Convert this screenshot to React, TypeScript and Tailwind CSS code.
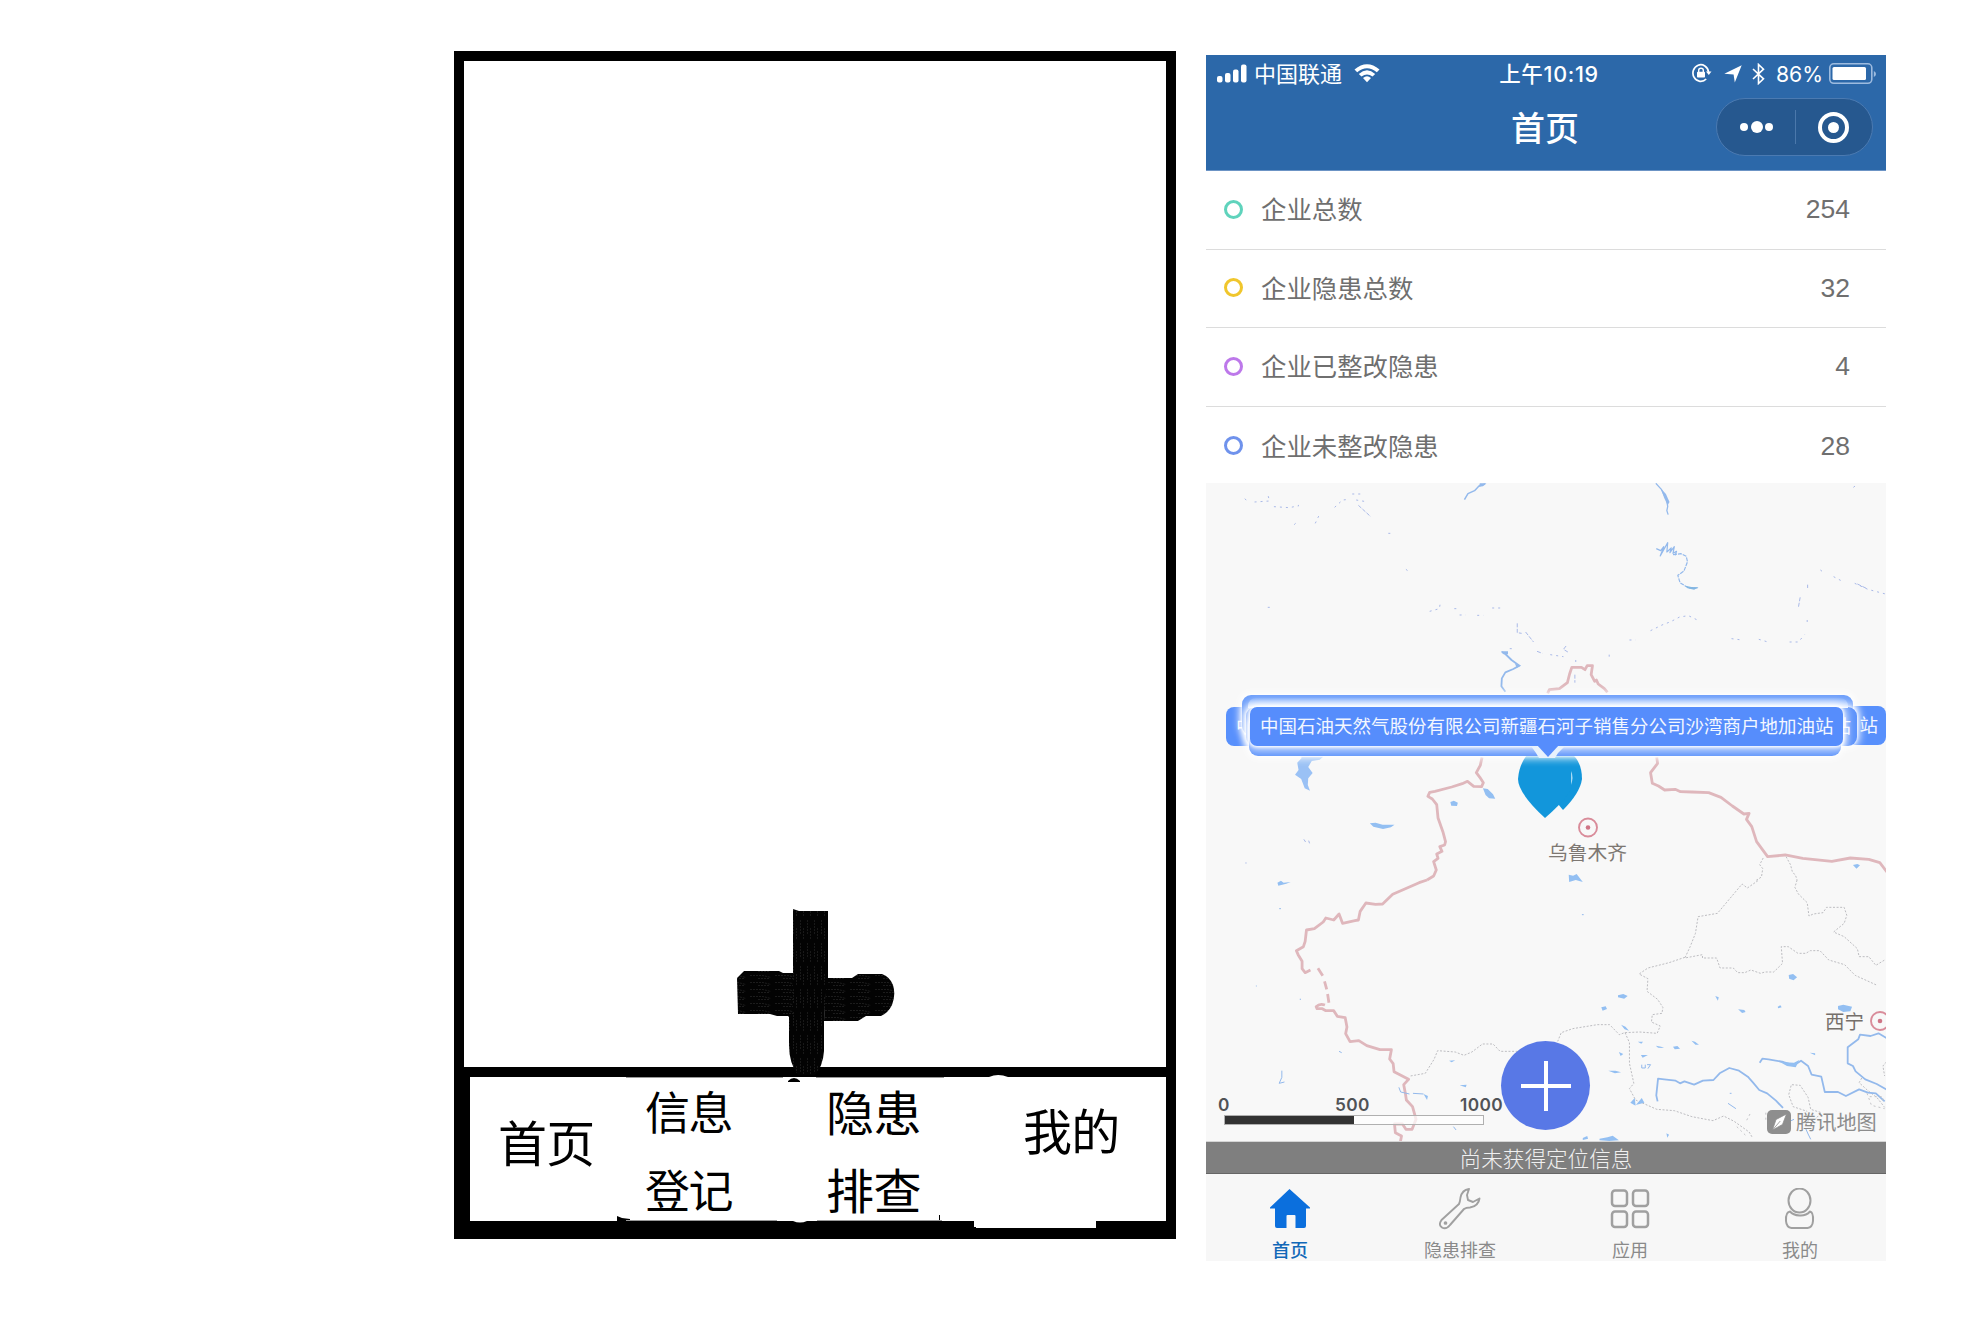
import React from "react";

const CJK = "font-['Noto_Sans_CJK_SC',sans-serif]";

const FULL_NAME = "中国石油天然气股份有限公司新疆石河子销售分公司沙湾商户地加油站";

const stats = [
  { label: "企业总数", value: "254", ring: "border-[#5fd3bc]" },
  { label: "企业隐患总数", value: "32", ring: "border-[#f0c62c]" },
  { label: "企业已整改隐患", value: "4", ring: "border-[#bd78ea]" },
  { label: "企业未整改隐患", value: "28", ring: "border-[#6f92ec]" },
];

function PlusStroke() {
  return (
    <svg className="absolute left-[280px] top-[852px] h-[240px] w-[170px]" viewBox="734 903 170 240">
      <defs>
        <pattern id="vert" width="7" height="23" patternUnits="userSpaceOnUse">
          <rect width="7" height="23" fill="#030303" />
          <path d="M2.5 0v14M5.5 8v12" stroke="#1e1e1e" strokeWidth="0.8" strokeDasharray="2 1" />
        </pattern>
        <pattern id="horiz" width="25" height="7" patternUnits="userSpaceOnUse">
          <rect width="25" height="7" fill="#030303" />
          <path d="M0 2.5h13l8 2M8 5.5h12" stroke="#222" strokeWidth="0.8" strokeDasharray="2 1" fill="none" />
        </pattern>
      </defs>
      <path
        d="M737 978l7-7h35l4 2h12v44h-6l-1-1h-11l-7-2h-32z M826 978h26l6-4h24q8 3 11 11 3 10-1 20-4 8-11 11h-15l-8 5h-34z"
        fill="url(#horiz)"
      />
      <path
        d="M793 909l6 2h29v68q-2 4-2 14l-2 28v30q-1 15-9 24h-17q-9-12-9-30v-28l4-3z"
        fill="url(#vert)"
      />
      <path d="M788 1081q6-6 12 0v1h-12z" fill="#000" />
    </svg>
  );
}

function Sketch() {
  return (
    <section
      className={`relative ml-[454px] mt-[51px] flex h-[1188px] w-[722px] flex-col bg-black pb-[18px] pl-[10px] pr-[10px] pt-[10px] text-black ${CJK}`}
    >
      <div className="h-[1006px] shrink-0 bg-white" />
      <div className="ml-[6px] mt-[10px] flex h-[144px] bg-white">
        <div className="w-[150px] pl-[28px] pt-[28px] text-[49px] leading-[72px] tracking-[-0.700px]">首页</div>
        <div className="w-[182px] pl-[25px] text-[45px] leading-[78px] tracking-[-1.500px]">
          <div className="-mt-[5px] whitespace-nowrap">信息</div>
          <div className="whitespace-nowrap">登记</div>
        </div>
        <div className="w-[196px] pl-[24px] text-[48px] leading-[78px] tracking-[-0.500px]">
          <div className="-mt-[6px] whitespace-nowrap">隐患</div>
          <div className="whitespace-nowrap">排查</div>
        </div>
        <div className="pl-[25px] pt-[16px] text-[49px] leading-[72px] tracking-[-0.700px]">我的</div>
      </div>
      <svg className="absolute left-0 top-[1020px] h-[168px] w-[722px]" viewBox="454 1071 722 168">
        <path d="M974 1221h122v7h-120v-1h-2z" fill="#fff" />
        <path d="M989 1077q9-4 19 0z" fill="#fff" />
        <path d="M793 1221q7 3 14 0z" fill="#fff" />
        <path d="M617 1216l5 2 8 1v2h-13zM939 1215h1v7h-1z" fill="#000" />
        <path d="M626 1077.500h157M816 1077.500h128M626 1220.500h151M817 1220.500h125" stroke="#999" strokeWidth="1" />
      </svg>
      <PlusStroke />
    </section>
  );
}

function StatusBar() {
  return (
    <div className="relative flex h-[38px] items-center pl-[11px] pr-[10px]">
      <svg className="h-[20px] w-[30px]" viewBox="0 0 30 20" fill="#fff">
        <rect x="0" y="12" width="5.500" height="6.500" rx="2" />
        <rect x="8" y="9" width="5.500" height="9.500" rx="2" />
        <rect x="16" y="5.500" width="5.500" height="13" rx="2" />
        <rect x="24" y="0.500" width="5.500" height="18" rx="2" />
      </svg>
      <span className="relative -top-[2px] ml-[7px] text-[22px] leading-[38px]">中国联通</span>
      <svg className="relative -top-px ml-[12px] h-[19px] w-[26px]" viewBox="0 0 26 19" fill="#fff">
        <path d="M0.500 5.500Q13-5 25.500 5.500L22.800 8.300Q13 0 3.200 8.300z" />
        <path d="M4.800 9.900Q13 2.800 21.200 9.900L18.500 12.600Q13 8.200 7.500 12.600z" />
        <path d="M9 14Q13 10.600 17 14L13 18.300z" />
      </svg>
      <div className="absolute inset-x-0 text-center font-['Inter','Noto_Sans_CJK_SC',sans-serif] text-[21.500px] font-medium leading-[38px] tracking-[0.700px]">
        <span className="relative left-[3px]">上午10:19</span>
      </div>
      <svg className="relative -top-px ml-auto h-[20px] w-[20px]" viewBox="0 0 20 20" fill="none" stroke="#fff" strokeWidth="1.700">
        <path d="M16.500 9A7.800 8.300 0 1 0 14.200 16" />
        <path d="M14 8.500h5.500l-2.700 3.500z" fill="#fff" stroke="none" />
        <rect x="5" y="8.800" width="8" height="5.800" rx="0.800" fill="#fff" stroke="none" />
        <path d="M6.700 9V7.200q0-2 2.300-2t2.300 2V9" strokeWidth="1.400" />
      </svg>
      <svg className="ml-[12px] h-[18px] w-[18px]" viewBox="0 0 18 18" fill="#fff">
        <path d="M17.700 0.300L10.800 17.500L9.600 9.400L0.300 8.800z" />
      </svg>
      <svg className="ml-[10px] h-[22px] w-[13px]" viewBox="0 0 13 22" fill="none" stroke="#fff" strokeWidth="1.600">
        <path d="M1 6l10.500 9.800L6.500 20.500V1.500l5 4.700L1 16" />
      </svg>
      <span className="ml-[11px] font-['Inter',sans-serif] text-[21.200px] leading-[38px]">86%</span>
      <svg className="ml-[6px] h-[22px] w-[47px]" viewBox="0 0 47 22">
        <rect x="0.800" y="0.800" width="42" height="19.500" rx="4" fill="none" stroke="#9dbbdf" strokeWidth="1.600" />
        <rect x="3.500" y="4" width="33.500" height="13" rx="1.500" fill="#fff" />
        <path d="M44.800 8q2.200 1 2.200 3t-2.200 3z" fill="#9dbbdf" />
      </svg>
    </div>
  );
}

function Header() {
  return (
    <header className="flex h-[116px] flex-col border-b border-[#6c94c5] bg-[#2c68a9] text-white">
      <StatusBar />
      <div className="relative flex h-[72px] items-center justify-center">
        <h1 className="relative -top-[2px] left-[-1px] text-[34px] font-medium leading-[48px]">首页</h1>
        <div className="absolute right-[13px] top-[5px] flex h-[58px] w-[157px] items-center rounded-full border border-[#4b7ab1] bg-[#26588f]">
          <div className="flex w-[78px] items-center justify-center gap-[2.500px] pl-[1px]">
            <i className="h-[8px] w-[8px] rounded-full bg-white" />
            <i className="h-[12px] w-[12px] rounded-full bg-white" />
            <i className="h-[8px] w-[8px] rounded-full bg-white" />
          </div>
          <div className="h-[34px] w-px bg-[#4b78ab]" />
          <div className="ml-[22px] flex h-[31px] w-[31px] items-center justify-center rounded-full border-[4px] border-white">
            <i className="h-[11px] w-[11px] rounded-full bg-white" />
          </div>
        </div>
      </div>
    </header>
  );
}

function StatList() {
  return (
    <ul className="flex h-[312px] flex-col bg-white text-[#6f6f6f]">
      {stats.map((s, i) => (
        <li
          key={s.label}
          className={`flex h-[78.600px] shrink-0 items-center pb-px pl-[18px] pr-[36px] ${i < 3 ? "border-b border-[#dcdcdc]" : ""}`}
        >
          <span className={`h-[19px] w-[19px] rounded-full border-[3px] ${s.ring}`} />
          <span className="relative -top-px ml-[18px] text-[25.400px] leading-[36px]">{s.label}</span>
          <span className="ml-auto font-['Liberation_Sans',sans-serif] text-[26.500px] leading-[36px]">{s.value}</span>
        </li>
      ))}
    </ul>
  );
}

function MapDrawing() {
  const red = { stroke: "#dfb7bc", fill: "none", vectorEffect: "non-scaling-stroke" as const, strokeWidth: 2.8, strokeLinejoin: "round" as const };
  const blue = { stroke: "#93b9ec", fill: "none", vectorEffect: "non-scaling-stroke" as const, strokeWidth: 1.8, strokeLinejoin: "round" as const };
  const thin = { stroke: "#a9b9e8", fill: "none", vectorEffect: "non-scaling-stroke" as const, strokeWidth: 1 };
  const gray = { stroke: "#bdbdc1", fill: "none", vectorEffect: "non-scaling-stroke" as const, strokeWidth: 1, strokeDasharray: "2 1.6" };
  return (
    <svg className="absolute inset-0 h-full w-full" viewBox="0 0 680 658">
      <g transform="translate(-6 -3) scale(0.44 0.33333)">
        <path {...blue} strokeWidth={1.5} d="M648 12l-14 6-10 14-15 9-8 18" />
        <path d="M636 10h15l-8 9-9 1z" fill="#93b9ec" />
        <path {...blue} strokeWidth={1.3} d="M1036 10l13 19 5 14 6 14 3 22-2 13 3 12" />
        <path d="M1047 25l12 17 8 24-4 10-8-22z" fill="#93b9ec" />
        <path {...blue} strokeWidth={1.2} d="M1037 206l10 6 7-12-8 28 17-40-2 28 10-12-3 14 10-18-3 20 8-6-3 12" />
        <path {...blue} strokeWidth={1.2} d="M1075 224l18-3 12 8 3 16-8 28-14 13 5 22 12 10 8 6h20" strokeDasharray="4 1" />
        <path d="M1102 317l15 4 16 1-10 7-15-4z" fill="#83b6e2" />
        <path {...thin} strokeDasharray="2 4" d="M102 56l4 6M124 66l34-3-4-20M168 80l35 3 22-6-8-6M306 82l18-22 16-2M346 42h20M355 60l18 4M214 134l10-12M262 130l10-28M522 394l22-8 2-16M578 386h10M590 405h14M630 406h14M664 384h24M468 268l10 10M428 160h8M154 382h6M1024 452l26-17 20-10 20-14 20-4 22 14M976 480h14M1208 476l24 4M1270 478l26 10M1340 486h20l14-22M1380 420v10M1410 270l6 6M1440 290l20 14M1488 310l30 18 40 14M1485 22l8-8M704 506h8M796 524l30 6M930 524v8M854 540v14" />
        <path {...thin} strokeDasharray="4 1.5" d="M360 76l28 34M721 430v28l10 2M740 456l18 30M766 514l12 6M832 498l-6 10 10 8M1381 314v10M1364 352l-4 30M852 584v24M1494 312l22 14" />
        <path {...blue} d="M686 516l8 6 14 18 18 17-14 10-18 10-8 18-1 24 9 16" />
        <path d="M684 514h16v9h-10zM716 552l14 4-10 7z" fill="#93b9ec" />
        <path {...red} d="M790 640l4-11 23-3 18-18 5-26 5-20 22 0 8 7 5-12 12 0-3 27 8 20 4-4 4 12 14 14 7 11" />
      </g>
      <g transform="translate(-6 197) scale(0.44 0.33333)">
        <path d="M230 230h50l-8 9-18 4-8 18 10 18-10 16-1 20 5 17-12-7-8-28-14-13 8-14-3-22 10-14z" fill="#9ac1f5" />
        <path
          {...red}
          d="M641 232L637 256 628 278 636 292 644 308 640 320 622 319 608 304 596 311 572 321 534 334 522 337 518 349 528 357 538 374 541 414 552 455 558 485 556 495 545 500 550 514 538 522 541 535 531 545 537 570 531 588 516 600"
        />
        <path
          {...red}
          d="M1038 232L1040 250 1024 278 1028 310 1042 318 1056 330 1080 328 1092 335 1118 336 1156 338 1184 352 1210 378 1236 402 1248 400 1242 418 1254 440 1265 485 1290 530 1330 525 1370 535 1436 544 1478 534 1520 538 1545 548 1562 577"
        />
        <path d="M643 325l11 2 12 16 5 13-14-1-8-10zM569 366l8-4 9 6-2 10-13-1zM386 430l13-2 16 6 27 0-8 8-18 5-22-7zM838 584l10 3 8-5 14 24-16-6-15 6zM176 608l8-6 6 6 16-2-10 5-18 6zM1484 555l10-3 6 4-8 10z" fill="#93bff2" />
        <path {...thin} d="M236 478l4 8M247 482l2 8M103 549h3" />
        <path {...gray} d="M1280 534l-8 20 7 12-3 25-12 10" />
        <path {...gray} d="M1332 530l10 24 4 20 8 14 3 12" />
      </g>
      <g transform="translate(-6 397) scale(0.44 0.33333)">
        <path {...red} d="M516 0l-18 8-60 35-23 29-16 1-22-4-13 25-4 26-8 2-28 8-8-28-12 18-18-6-6 12-20 20-18 4-3 34-4 16-16 12 4 12 9 20 0 22 7 12 12-8" />
        <path {...red} d="M268 265l11 22M283 304l5 24M290 342l3 26" />
        <path {...red} d="M284 375q-12-6-20 5l2 6h12l8 6h18l8 17 18 4 4 28-3 20 10 24 20-3 18 15 30 12 26 0-4 28 8 14 2 24 33 23-11 16 4 28 2 18 14 20 8 38-9 30-14 0-8-16-18 0 2 26 14 10-3 20" />
        <path {...gray} d="M1268 2l-24 22-12-12-28 44-28 44-44 10-6 50-12 40-12 34 40-10 0 10h32l8 30 30 0 10 14 16 0 14-8 22 10 10-4 20 0 20-26-3-50 16 0 22 20 18 0 10-8 22 0 20 28 36 14 24 32 50 30" />
        <path {...gray} d="M1102 232l-36 16-48 16-20 18 20 14-2 38 24 24 12 24-2 18-22 4-2 22 20 12-7 22-40-4-34 2-12 6-22-30-28 0-56 12-26 12-8 26M722 514h-40l-16-22h-24l-24 24-18 10-20-10-40-4-8 26-20 42-34 8" />
        <path {...gray} d="M966 458l10 30v62l10 60-10 16 14 34 48 28 40 4 40 18 48 12 24-14 24 16 34 32 8 18 M1357 0l-5 22 8 20 20 26 4 40 10-6 22-4 8-16 40 0 6 24-6 24-24 26 24 14 30 36 4 24 22 0 16 26 20-16" />
        <path {...gray} d="M1380 724l18-6 14-20-24-10-6-36-18-36-20-2-6 30 10 36 32 14M1560 546l-8 12 4 30M1504 594l-6 14 20 24 20 20 18 30" />
        <path {...blue} d="M1040 664l-3-18 4-50 14 2 26 4 10 8 10-6 22 10 20-12 24-2 14-20 22-16 22 8 20 18 12 18 14 22 18 10 20 22 16 22" />
        <path {...blue} d="M1272 548l6-12 14 2 34 8 24 10 16-14 16 16 8 26 22 6 8 46 30 0 18 12 30-20 20 10 18 2 20 24" />
        <path d="M1318 546l32 2 12-8-8 22-20-4z" fill="#93bff2" />
        <path {...blue} d="M1560 474l-18-14-18 8-24-4-4 14-24 24 0 48 12 8 6 16 22 24 26 14 24 18" />
        <path d="M950 346l12-4 10 6-8 8-14-4zM912 382l10-3 3 8-10 5zM1338 285l10-3 9 10-8 9-10-5zM1450 378l12-4 20 6-4 14-16 2-12-8zM1223 388l14 2 3 6-8 3zM1171 348l8 4-2 10zM1313 380l6-4 3 6-8 3zM957 434l10 6 8 12-10-4zM995 485l12 0-4 6zM1036 497l12 3 7 4-14-1zM1075 500l10-2 6 8-12 2zM1117 482l8 3 9 9-8 0zM952 516l10 6-6 6zM1002 525l16 0-12 8zM928 572l16 0 13 5-14 3zM566 542l14-1-8 6zM590 616l16-2-2 8zM508 642l10 6-2 12zM1386 518l12 2 0 6zM1060 760l6 4-4 9zM870 774l10-6 2 8-12 4zM908 776l18-4 12-5 14 14-22 2-22-2zM978 668l10-14 2 22 14-22 6 14-22 8z" fill="#93bff2" />
        <path {...thin} stroke="#93b9ec" d="M1004 554v10h8v-10M1016 554h8l-6 12M186 572v20l-6 18 12-4M452 622l4 14 20 6M484 640l24 2M316 514l6 4M127 318h2M228 356v4M180 86h4M868 104h4M1204 640h4M1200 670l18 16M1340 724l10-6M1376 744l6 18 6 16M576 740l6 10" />
        <path {...thin} stroke="#c4c4c8" strokeDasharray="2 3" d="M1250 702l-8 20M1286 698v24M1220 740l20 26M1516 640l10 36 30 10M1522 650l30 0 0 20" />
      </g>
      <g fill="none" stroke="#d98c9a">
        <circle cx="382" cy="344.500" r="9" strokeWidth="1.900" />
        <circle cx="674" cy="538" r="9" strokeWidth="1.900" />
      </g>
      <circle cx="382" cy="344.500" r="2.300" fill="#cf7586" />
      <circle cx="674" cy="538" r="2.300" fill="#cf7586" />
      <g fill="#1296db">
        <path d="M352 270h13q11 9 11 26-2 14-19 31l-5-6z" />
        <path d="M339 335Q312 310 312 296Q313 282 321 272L329 266H351L359 272Q367 282 368 296Q368 310 339 335z" />
      </g>
      <path d="M365 288q3 6 0 14z" fill="#a7daf3" />
    </svg>
  );
}

const glow = "shadow-[0_0_3px_#fff,0_0_9px_2px_#fff]";

function Callouts() {
  return (
    <div className="text-[18.500px] leading-[37px] text-[#f3f7ff]">
      <div className="absolute left-[20px] top-[224px] h-[39px] w-[620px] rounded-[8px] bg-[#5890fc]">
        <span className="absolute left-[10px]">中</span>
      </div>
      <div className="absolute left-[60px] top-[223px] h-[39px] w-[620px] rounded-[8px] bg-[#5890fc] pr-[8px] text-right">站</div>
      <div className={`absolute left-[36px] top-[212px] h-[40px] w-[611px] rounded-[9px] bg-[#6fa0fb] ${glow}`} />
      <div className={`absolute left-[40px] top-[224px] h-[39px] w-[611px] overflow-hidden rounded-[9px] bg-[#5c92fb] text-right ${glow}`}>
        <span className="mr-[6px]">站</span>
      </div>
      <div className={`absolute left-[43px] top-[234px] h-[39px] w-[592px] rounded-[9px] bg-[#6196fb] ${glow}`} />
      <div className="absolute left-[42px] top-[215px] h-[10px] w-[600px] rounded-t-[8px] bg-gradient-to-b from-[#7daafb] to-[#f4f8ff]" />
      <div className="absolute left-[44px] top-[224px] h-[39px] w-[593px] whitespace-nowrap rounded-[7px] bg-[#568dfc] pl-[10px] shadow-[0_0_3px_1px_#fff,0_0_8px_4px_#ffffffcc]">
        {FULL_NAME}
      </div>
      <svg className="absolute left-[325px] top-[262px] h-[14px] w-[34px]" viewBox="0 0 34 14">
        <path d="M0 1h34l-7 7-3 5H8L5 8z" fill="#e8f2fc" />
        <path d="M6 0h22L17 12z" fill="#568dfc" />
      </svg>
    </div>
  );
}

function MapPanel() {
  return (
    <div className="relative h-[658px] shrink-0 overflow-hidden bg-[#f8f8f8]">
      <MapDrawing />
      <Callouts />
      <div className="absolute left-[342px] top-[355px] text-[19.800px] leading-[28px] text-[#7d7772]">乌鲁木齐</div>
      <div className="absolute left-[619px] top-[524px] text-[19.500px] leading-[28px] text-[#756f6a]">西宁</div>
      <div className="font-['Inter',sans-serif] text-[17.300px] font-semibold leading-[20px] tracking-[0.400px] text-[#505256]">
        <span className="absolute left-[12px] top-[612px]">0</span>
        <span className="absolute left-[129px] top-[612px]">500</span>
        <span className="absolute left-[254px] top-[612px]">1000</span>
      </div>
      <div className="absolute left-[18px] top-[632px] h-[10px] w-[260px] border border-[#b0b0b0] bg-white/70">
        <div className="h-full w-1/2 bg-[#333]" />
      </div>
      <button className="absolute left-[295px] top-[558px] flex h-[89px] w-[89px] items-center justify-center rounded-full bg-[#5878e6]">
        <svg className="h-[50px] w-[50px]" viewBox="0 0 50 50" stroke="#fff" strokeWidth="4">
          <path d="M25 0v50M0 25h50" />
        </svg>
      </button>
      <div className="absolute left-[561px] top-[625px] flex items-center text-[20.200px] leading-[28px] text-[#8c8c8c]">
        <svg className="mr-[5px] h-[24px] w-[24px]" viewBox="0 0 24 24">
          <rect width="24" height="24" rx="5" fill="#8e8e8e" />
          <path d="M19.500 4L15.500 14.500L5.500 20L9 9.500zM5.500 20L13.300 11" fill="#fff" stroke="#8e8e8e" strokeWidth="0.800" />
        </svg>
        腾讯地图
      </div>
    </div>
  );
}

function HomeIcon() {
  return (
    <svg className="h-[42px] w-[42px]" viewBox="0 0 42 42" fill="#0b6fdd">
      <path d="M20.500 1L41 19.500V20.500H37V38q0 2-2 2h-8.500V28q0-1-1-1h-7q-1 0-1 1v12H8q-2 0-2-2V20.500H1V19.500z" />
    </svg>
  );
}

function WrenchIcon() {
  return (
    <svg className="h-[42px] w-[42px]" viewBox="0 0 42 42" fill="none" stroke="#a0a0a0" strokeWidth="1.900" strokeLinejoin="round">
      <path d="M30 1Q23 2 21.500 9.500Q21 14 20 16L2.500 32Q-1 37 3 39.500Q7 42 11 37L25 21Q27 19.500 31 19.500Q39.500 18 40.500 10.500L34 14L29 12L28 7z" />
      <circle cx="6.500" cy="35" r="0.900" />
    </svg>
  );
}

function AppsIcon() {
  return (
    <svg className="h-[42px] w-[42px]" viewBox="0 0 42 42" fill="none" stroke="#a0a0a0" strokeWidth="2.500">
      <rect x="3" y="2.500" width="15" height="15.500" rx="3" />
      <rect x="24" y="2.500" width="15" height="15.500" rx="3" />
      <rect x="3" y="23.500" width="15" height="15.500" rx="3" />
      <rect x="24" y="23.500" width="15" height="15.500" rx="3" />
    </svg>
  );
}

function UserIcon() {
  return (
    <svg className="h-[42px] w-[42px]" viewBox="0 0 42 42" fill="none" stroke="#a0a0a0" strokeWidth="2">
      <ellipse cx="20.500" cy="12.500" rx="11" ry="12" />
      <path d="M11 23.500Q6.500 24 7 33q.5 6.500 5.500 7h16q5-.5 5.500-7 .5-9-3-9.500-4 4.500-10.500 4T11 23.500z" strokeLinejoin="round" />
    </svg>
  );
}

const tabs = [
  { label: "首页", icon: <HomeIcon />, cls: "text-[#1268b8] font-medium" },
  { label: "隐患排查", icon: <WrenchIcon />, cls: "text-[#8a8a8a]" },
  { label: "应用", icon: <AppsIcon />, cls: "text-[#8a8a8a]" },
  { label: "我的", icon: <UserIcon />, cls: "text-[#8a8a8a]" },
];

function TabBar() {
  return (
    <nav className="grid h-[87px] shrink-0 grid-cols-4 bg-[#f7f7f7]">
      {tabs.map((t) => (
        <div key={t.label} className={`flex flex-col items-center pr-[2px] pt-[14px] text-[18px] leading-[20px] ${t.cls}`}>
          {t.icon}
          <span className="mt-[9px]">{t.label}</span>
        </div>
      ))}
    </nav>
  );
}

function Phone() {
  return (
    <section className={`ml-[30px] mt-[55px] flex h-[1206px] w-[680px] flex-col ${CJK}`}>
      <Header />
      <StatList />
      <MapPanel />
      <div className="flex h-[33px] shrink-0 items-center justify-center border-b border-t border-b-[#666] border-t-[#d5d5d5] bg-[#7f7f7f] text-[21.600px] font-light leading-[30px] text-[#f0f0f0]">
        尚未获得定位信息
      </div>
      <TabBar />
    </section>
  );
}

export default function App() {
  return (
    <main className="flex h-[1334px] w-[1968px] items-start overflow-hidden bg-white">
      <Sketch />
      <Phone />
    </main>
  );
}
